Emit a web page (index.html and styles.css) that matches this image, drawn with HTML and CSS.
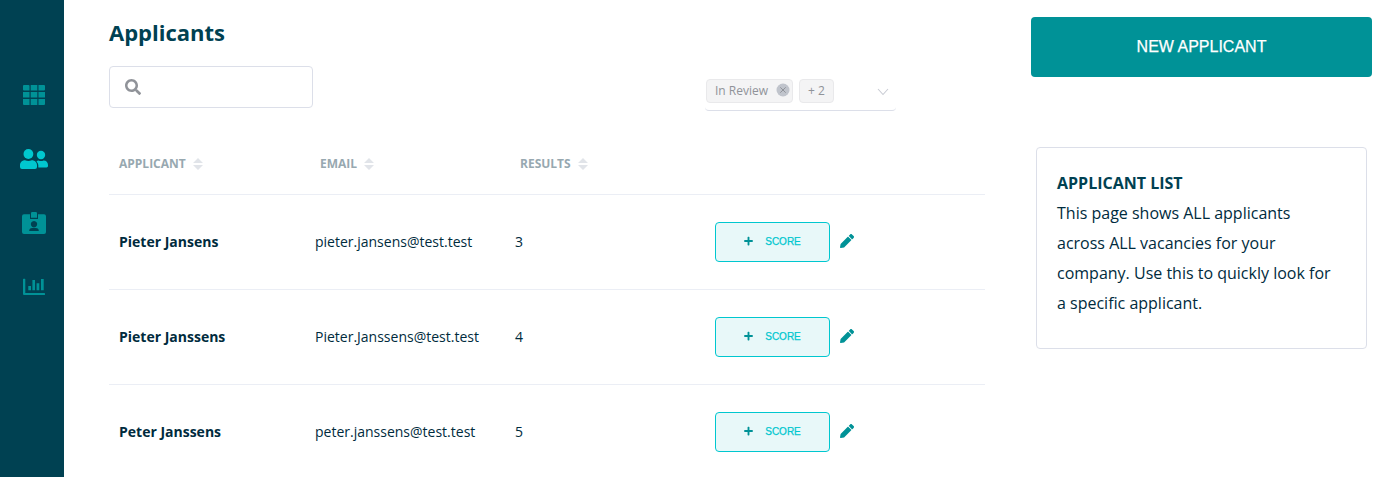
FILE: index.html
```html
<!DOCTYPE html>
<html lang="en">
<head>
<meta charset="utf-8">
<title>Applicants</title>
<link rel="stylesheet" href="styles.css">
</head>
<body>
<svg class="defs" width="0" height="0">
  <symbol id="sort" viewBox="0 0 10 12"><path d="M0 5 5 0l5 5zM0 7h10l-5 5z"/></symbol>
  <symbol id="plus" viewBox="0 0 448 512"><path d="M416 208H272V64c0-18-14-32-32-32h-32c-18 0-32 14-32 32v144H32c-18 0-32 14-32 32v32c0 18 14 32 32 32h144v144c0 18 14 32 32 32h32c18 0 32-14 32-32V304h144c18 0 32-14 32-32v-32c0-18-14-32-32-32z"/></symbol>
  <symbol id="pencil" viewBox="0 0 512 512"><path d="M498 142l-46 46c-5 5-12 5-17 0L324 77c-5-5-5-12 0-17l46-46c19-19 49-19 68 0l60 60c19 19 19 49 0 68zM284 100L22 362 .4 484c-3 16 11 30 28 28l121-22 262-262c5-5 5-12 0-17L300 100c-4-5-12-5-16 0z"/></symbol>
</svg>
<div class="app">
  <nav class="sidebar">
    <a class="nav-item"><svg viewBox="0 0 32 32"><path d="M6 6h4.500a1 1 0 0 1 1 1v4.500H6a1 1 0 0 1-1-1V7a1 1 0 0 1 1-1zM12.700 6h6.600v5.500h-6.600zM20.500 6H26a1 1 0 0 1 1 1v3.500a1 1 0 0 1-1 1h-5.500zM5 12.900h6.500v5.700H5zM12.700 12.900h6.600v5.700h-6.600zM20.500 12.900H27v5.700h-6.500zM5 20h6.500v6H6a1 1 0 0 1-1-1zM12.700 20h6.600v6h-6.600zM20.500 20H27v5a1 1 0 0 1-1 1h-5.500z"/></svg></a>
    <a class="nav-item active"><svg viewBox="0 0 32 32"><circle cx="10.400" cy="11" r="4.900"/><circle cx="23" cy="12" r="4.200"/><path d="M7 17.200q3.400 1.400 6.800 0c3.200 0 5.200 2.200 5.200 5V24a2 2 0 0 1-2 2H4a2 2 0 0 1-2-2v-1.800c0-2.800 2-5 5-5zM20.400 17.600q2.600 1 5.200 0c2.600 0 4.400 2 4.400 4.300V23q0 1.400-1.400 1.400h-8.300c.3-2.700-.3-4.500-1.800-5.900q.8-.7 1.900-.9z"/></svg></a>
    <a class="nav-item"><svg viewBox="0 0 32 32"><path fill-rule="evenodd" d="M6 7.300h6V12h8V7.300h6a2 2 0 0 1 2 2V25a2 2 0 0 1-2 2H6a2 2 0 0 1-2-2V9.300a2 2 0 0 1 2-2zM16 14a3.200 3.200 0 1 0 .01 0zM11.200 24h9.600q0-3-3-3h-3.600q-3 0-3 3z"/><path d="M14.200 5h3.600Q19 5 19 6.200v4.600h-6V6.200Q13 5 14.200 5z"/></svg></a>
    <a class="nav-item"><svg viewBox="0 0 32 32"><path d="M5.600 7.700h1.100q.6 0 .6.600V22h19.100q.6 0 .6.600v.8q0 .6-.6.600H6a1 1 0 0 1-1-1V8.300q0-.6.600-.6zM10.300 15H13v4.200h-2.700zM14.400 9H17v10.200h-2.600zM18.600 12.200h2.700v7h-2.700zM23 8h2.700v11.200H23z"/></svg></a>
  </nav>
  <main class="content">
    <h1 class="title">Applicants</h1>
    <div class="filters">
      <div class="search"><svg viewBox="0 0 512 512"><path d="M505 443L405 343c-4-4-11-7-17-7h-16c28-35 44-80 44-128C416 93 323 0 208 0S0 93 0 208s93 208 208 208c48 0 93-16 128-44v16c0 6 3 13 7 17l100 100c9 9 24 9 34 0l28-28c9-10 9-25 0-34zM208 336c-71 0-128-57-128-128S137 80 208 80s128 57 128 128-57 128-128 128z"/></svg></div>
      <div class="select">
        <span class="tag">In Review<svg class="close" viewBox="0 0 14 14"><circle cx="7" cy="7" r="6.500"/><path d="M4.300 4.300l5.400 5.400m0-5.400L4.300 9.700"/></svg></span>
        <span class="tag">+ 2</span>
        <svg class="chevron" viewBox="0 0 12 8"><path d="M1 1l5 5.500L11 1"/></svg>
      </div>
    </div>
    <section class="table">
      <div class="row head">
        <div class="cell">APPLICANT<svg class="sort"><use href="#sort"/></svg></div>
        <div class="cell">EMAIL<svg class="sort"><use href="#sort"/></svg></div>
        <div class="cell">RESULTS<svg class="sort"><use href="#sort"/></svg></div>
      </div>
      <div class="row">
        <div class="name">Pieter Jansens</div><div>pieter.jansens@test.test</div><div>3</div>
        <div class="actions"><button class="score"><svg><use href="#plus"/></svg>SCORE</button><svg class="edit"><use href="#pencil"/></svg></div>
      </div>
      <div class="row">
        <div class="name">Pieter Janssens</div><div>Pieter.Janssens@test.test</div><div>4</div>
        <div class="actions"><button class="score"><svg><use href="#plus"/></svg>SCORE</button><svg class="edit"><use href="#pencil"/></svg></div>
      </div>
      <div class="row">
        <div class="name">Peter Janssens</div><div>peter.janssens@test.test</div><div>5</div>
        <div class="actions"><button class="score"><svg><use href="#plus"/></svg>SCORE</button><svg class="edit"><use href="#pencil"/></svg></div>
      </div>
    </section>
  </main>
  <aside class="side">
    <button class="new">NEW APPLICANT</button>
    <div class="card">
      <h2>APPLICANT LIST</h2>
      <p>This page shows ALL applicants across ALL vacancies for your company. Use this to quickly look for a specific applicant.</p>
    </div>
  </aside>
</div>
</body>
</html>
```

FILE: styles.css
```css
* { box-sizing: border-box; }
body { margin: 0; background: #fff; color: #002b3d; font: 14px/20px "Open Sans", "Noto Sans", sans-serif; overflow: hidden; }
.defs { display: block; }
.app { display: flex; height: 477px; }
.sidebar { width: 64px; background: #004152; padding-top: 63px; flex: none; }
.nav-item { display: flex; height: 64px; padding: 16px 0 0 18px; color: #009297; }
.nav-item svg { width: 32px; height: 32px; fill: currentColor; }
.nav-item.active { color: #00c7cf; }
.content { width: 876px; margin-left: 45px; padding-top: 16px; flex: none; }
.title { margin: 0; font-size: 22px; line-height: 32px; font-weight: 700; color: #004152; }
.filters { display: flex; justify-content: space-between; margin-top: 18px; padding-right: 89px; height: 45px; }
.search { width: 204px; height: 42px; border: 1px solid #dcdfe9; border-radius: 4px; padding: 12px 15px; }
.search svg { display: block; width: 16px; height: 16px; fill: #909399; }
.select { display: flex; align-items: flex-start; gap: 6px; width: 191px; height: 45px; padding: 13px 7px 0 1px; border-bottom: 1px solid #dcdfe9; border-radius: 4px; }
.tag { display: flex; align-items: center; height: 24px; padding: 0 8px; border: 1px solid #e9e9eb; border-radius: 4px; background: #f4f4f5; color: #909399; font-size: 12px; line-height: 22px; white-space: nowrap; }
.close { width: 14px; height: 14px; margin: -2px -6px 0 8px; fill: #c0c4cc; stroke: #909399; stroke-width: 1; }
.close circle { stroke: none; }
.chevron { width: 12px; height: 8px; margin: 9px 0 0 auto; fill: none; stroke: #c9ccd4; stroke-width: 1.1; }
.table { margin-top: 22px; }
.row { display: grid; grid-template-columns: 196px 200px 200px 1fr; align-items: center; height: 95px; padding-left: 10px; border-bottom: 1px solid #ebeef5; }
.head { grid-template-columns: 201px 200px 1fr; height: 62px; color: #97a8b0; font-size: 12px; font-weight: 700; }
.cell { display: flex; align-items: center; gap: 7px; }
.sort { width: 10px; height: 12px; fill: #e1e4e9; }
.name { font-weight: 700; }
.actions { display: flex; align-items: center; gap: 10px; }
.score { display: flex; align-items: center; justify-content: center; gap: 12px; width: 115px; height: 40px; padding: 0; border: 1px solid #00c7cf; border-radius: 4px; background: #e8f8f9; color: #00c7cf; font: 10px/14px "Liberation Sans", Arial, sans-serif; -webkit-text-stroke: 0.25px; }
.score svg { width: 9px; height: 10px; margin-bottom: 2px; fill: #009297; }
.edit { width: 14px; height: 14px; margin-bottom: 2px; fill: #009297; }
.side { width: 341px; margin-left: 46px; padding-top: 17px; flex: none; }
.new { display: block; width: 341px; height: 60px; border: 0; border-radius: 4px; background: #009297; color: #fff; font: 16px/20px "Liberation Sans", Arial, sans-serif; -webkit-text-stroke: 0.25px; }
.card { width: 331px; height: 202px; margin: 70px 5px 0; padding: 20px 35px 20px 20px; border: 1px solid #dcdfe9; border-radius: 4px; font-size: 16px; line-height: 30px; }
.card h2 { margin: 0; font: inherit; font-weight: 700; color: #004152; }
.card p { margin: 0; }
```
